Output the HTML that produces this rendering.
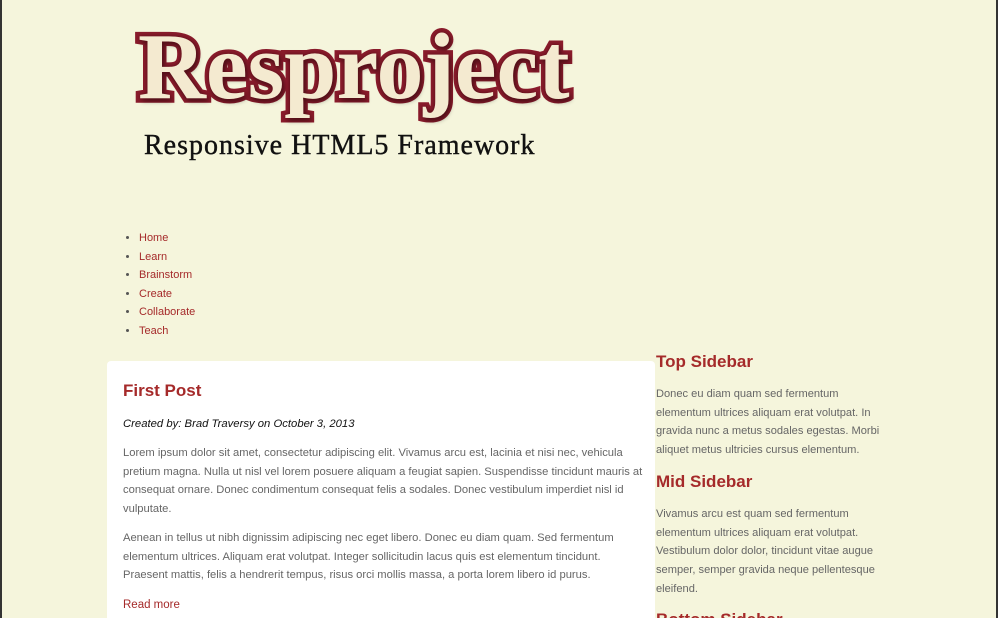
<!DOCTYPE html>
<html><head><style>
html,body{margin:0;padding:0;height:618px;overflow:hidden}
body{width:998px;background:#f5f5dc;font-family:"Liberation Sans",sans-serif;position:relative}
.bl{position:absolute;left:0;top:0;width:2px;height:618px;background:#333}
.br{position:absolute;right:0;top:0;width:2px;height:618px;background:#333}
.logo{position:absolute;left:138px;top:20px;font-family:"Liberation Serif",serif;font-weight:bold;font-size:94px;color:#f4ead0;-webkit-text-stroke:9px #8a1c2c;paint-order:stroke fill;text-shadow:0 0 4px #5a0f18,2px 3px 5px rgba(0,0,0,.45);letter-spacing:0;line-height:1}
.tag{position:absolute;left:144px;top:130px;font-family:"Liberation Serif",serif;font-size:28px;color:#111;letter-spacing:1px;-webkit-text-stroke:.4px #111}
ul{position:absolute;left:104px;top:229px;margin:0;padding-left:35px;font-size:11px;line-height:18.5px;color:#a52a2a}
ul li::marker{color:#555}
.main{position:absolute;left:107px;top:361px;width:520px;height:240px;background:#fff;border-radius:4px;padding:20px 12px 20px 16px}
h2{margin:0;font-size:17px;color:#a52a2a;font-weight:bold}
.meta{font-style:italic;font-size:11.3px;color:#111;margin:17px 0 14px}
p{font-size:11.2px;line-height:18.7px;color:#666;margin:0 0 10px}
a{color:#a52a2a;font-size:11.5px}
.side{position:absolute;left:656px;top:352px;width:240px}
.side h2{margin:0 0 13px}
.side p{margin:0 0 12px;font-size:11.1px}
</style></head><body>
<div class="bl"></div><div class="br"></div>
<div class="logo">Resproject</div>
<div class="tag">Responsive HTML5 Framework</div>
<ul><li>Home</li><li>Learn</li><li>Brainstorm</li><li>Create</li><li>Collaborate</li><li>Teach</li></ul>
<div class="main">
<h2>First Post</h2>
<div class="meta">Created by: Brad Traversy on October 3, 2013</div>
<p>Lorem ipsum dolor sit amet, consectetur adipiscing elit. Vivamus arcu est, lacinia et nisi nec, vehicula pretium magna. Nulla ut nisl vel lorem posuere aliquam a feugiat sapien. Suspendisse tincidunt mauris at consequat ornare. Donec condimentum consequat felis a sodales. Donec vestibulum imperdiet nisl id vulputate.</p>
<p>Aenean in tellus ut nibh dignissim adipiscing nec eget libero. Donec eu diam quam. Sed fermentum elementum ultrices. Aliquam erat volutpat. Integer sollicitudin lacus quis est elementum tincidunt. Praesent mattis, felis a hendrerit tempus, risus orci mollis massa, a porta lorem libero id purus.</p>
<a>Read more</a>
</div>
<div class="side">
<h2>Top Sidebar</h2>
<p>Donec eu diam quam sed fermentum elementum ultrices aliquam erat volutpat. In gravida nunc a metus sodales egestas. Morbi aliquet metus ultricies cursus elementum.</p>
<h2>Mid Sidebar</h2>
<p>Vivamus arcu est quam sed fermentum elementum ultrices aliquam erat volutpat. Vestibulum dolor dolor, tincidunt vitae augue semper, semper gravida neque pellentesque eleifend.</p>
<h2>Bottom Sidebar</h2>
</div>
</body></html>
